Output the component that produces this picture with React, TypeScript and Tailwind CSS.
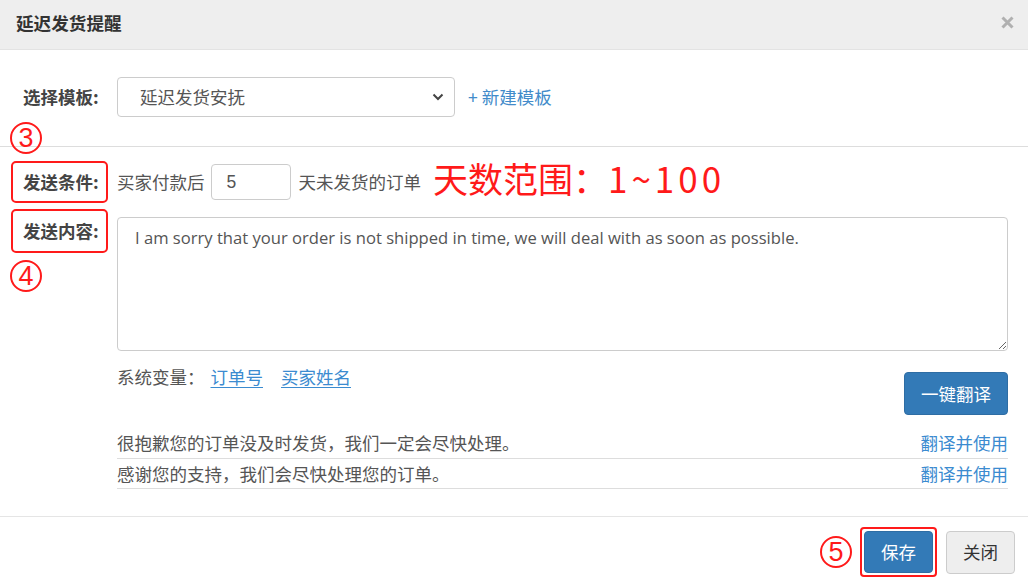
import React from "react";

const F = "font-['Microsoft_YaHei','Noto_Sans_CJK_SC',sans-serif]";

function Circled({ n }: { n: string }) {
  return (
    <span className="flex h-[32px] w-[32px] items-center justify-center rounded-full border-2 border-[#ff1a1a] text-[27px] leading-none text-[#ff1a1a] font-['Liberation_Sans',sans-serif]">
      {n}
    </span>
  );
}

export default function App() {
  return (
    <div className={`relative h-[586px] w-[1028px] overflow-hidden bg-white text-[#333] ${F}`}>
      {/* header */}
      <div className="flex h-[50px] items-center justify-between border-b border-[#e3e3e3] bg-[#eeeeee] pb-[4px] pl-[16px] pr-[14px]">
        <span className="text-[17.6px] font-bold leading-[24px] text-[#333]">延迟发货提醒</span>
        <svg width="13" height="13" viewBox="0 0 13 13">
          <path d="M1.5 1.5 L11.5 11.5 M11.5 1.5 L1.5 11.5" stroke="#b0b0b0" strokeWidth="3" />
        </svg>
      </div>

      {/* annotations */}
      <div className="absolute left-[10px] top-[122px]">
        <Circled n="3" />
      </div>
      <div className="absolute left-[10px] top-[260px]">
        <Circled n="4" />
      </div>

      {/* template row */}
      <div className="mt-[27px] flex h-[40px] items-center">
        <div className="w-[117px] pl-[23px] text-[17.5px] font-bold leading-[24px] text-[#444]">选择模板:</div>
        <div className="flex h-[40px] w-[338px] items-center justify-between rounded-[4px] border border-[#cccccc] pl-[22px] pr-[10px] text-[17.5px] leading-[24px] text-[#555]">
          <span>延迟发货安抚</span>
          <svg width="12" height="8" viewBox="0 0 12 8">
            <path d="M1.5 1.5 L6 6 L10.5 1.5" stroke="#444" strokeWidth="2" fill="none" />
          </svg>
        </div>
        <span className="ml-[13px] text-[17.5px] leading-[24px] text-[#428bca]">+ 新建模板</span>
      </div>

      <div className="mt-[29px] border-t border-[#dddddd]" />

      {/* condition row */}
      <div className="mt-[14px] flex items-center">
        <div className="ml-[11px] flex h-[42px] w-[97px] items-center rounded-[5px] border-2 border-[#ff1a1a] pl-[10px] text-[17.5px] font-bold leading-[24px] text-[#444]">
          发送条件:
        </div>
        <span className="ml-[9px] text-[17.5px] leading-[24px] text-[#555]">买家付款后</span>
        <div className="ml-[6px] flex h-[36px] w-[80px] items-center rounded-[4px] border border-[#cccccc] pl-[15px] text-[17.5px] leading-[24px] text-[#555] font-['Liberation_Sans',sans-serif]">
          5
        </div>
        <span className="ml-[8px] text-[17.5px] leading-[24px] text-[#555]">天未发货的订单</span>
        <span className="-mt-[8px] ml-[12px] whitespace-nowrap text-[35px] leading-[24px] text-[#ff1a1a]">
          天数范围：<span className="tracking-[4px]">1~100</span>
        </span>
      </div>

      {/* content row */}
      <div className="mt-[6px] flex items-start">
        <div className="ml-[11px] flex h-[44px] w-[97px] items-center rounded-[5px] border-2 border-[#ff1a1a] pl-[10px] text-[17.5px] font-bold leading-[24px] text-[#444]">
          发送内容:
        </div>
        <textarea
          readOnly
          value="I am sorry that your order is not shipped in time, we will deal with as soon as possible."
          className="ml-[9px] mt-[8px] h-[134px] w-[891px] rounded-[4px] border border-[#cccccc] px-[17px] py-[8px] text-[16.6px] leading-[24px] text-[#555] outline-none font-['Open_Sans','Noto_Sans_CJK_SC',sans-serif]"
        />
      </div>

      {/* variables row */}
      <div className="mt-[14px] flex items-start justify-between pl-[117px] pr-[20px]">
        <div className="flex text-[17.5px] leading-[24px] text-[#555]">
          <span>系统变量：</span>
          <span className="ml-[6px] text-[#3b8bd0] underline underline-offset-[3px]">订单号</span>
          <span className="ml-[18px] text-[#3b8bd0] underline underline-offset-[3px]">买家姓名</span>
        </div>
        <button className="mt-[7px] flex h-[43px] w-[104px] items-center justify-center rounded-[4px] border border-[#2e6da4] bg-[#337ab7] text-[17.5px] leading-[24px] text-white">
          一键翻译
        </button>
      </div>

      {/* list */}
      <div className="ml-[117px] mr-[20px] mt-[12px]">
        <div className="flex h-[32px] items-center justify-between border-b border-[#dddddd] text-[17.5px] leading-[24px]">
          <span className="text-[#555]">很抱歉您的订单没及时发货，我们一定会尽快处理。</span>
          <span className="text-[#3b8bd0]">翻译并使用</span>
        </div>
        <div className="flex h-[30px] items-center justify-between border-b border-[#dddddd] text-[17.5px] leading-[24px]">
          <span className="text-[#555]">感谢您的支持，我们会尽快处理您的订单。</span>
          <span className="text-[#3b8bd0]">翻译并使用</span>
        </div>
      </div>

      <div className="mt-[27px] border-t border-[#e5e5e5]" />

      {/* footer */}
      <div className="mt-[10px] flex items-center justify-end pr-[13px]">
        <Circled n="5" />
        <div className="ml-[8px] rounded-[4px] border-2 border-[#ff1a1a] p-[2px]">
          <button className="flex h-[42px] w-[69px] items-center justify-center rounded-[4px] border border-[#2e6da4] bg-[#337ab7] text-[17.5px] leading-[24px] text-white">
            保存
          </button>
        </div>
        <button className="ml-[9px] flex h-[43px] w-[69px] items-center justify-center rounded-[4px] border border-[#cccccc] bg-[#eeeeee] text-[17.5px] leading-[24px] text-[#333]">
          关闭
        </button>
      </div>
    </div>
  );
}
